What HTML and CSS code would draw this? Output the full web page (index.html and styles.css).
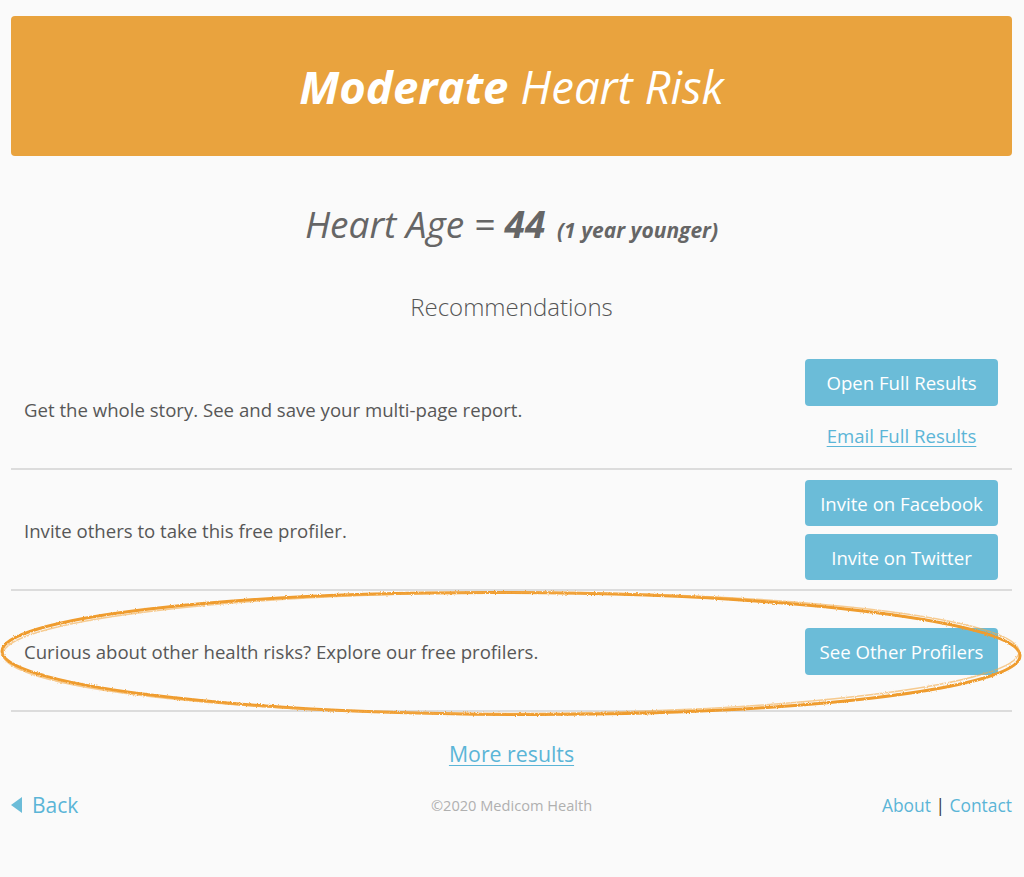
FILE: index.html
```html
<!DOCTYPE html>
<html>
<head>
<meta charset="utf-8">
<link rel="stylesheet" href="styles.css">
</head>
<body>
<div class="page">
  <header class="banner">
    <h1 class="banner-title"><b>Moderate</b> Heart Risk</h1>
  </header>

  <div class="heart-age">Heart Age = <b>44</b> <span class="diff">(1 year younger)</span></div>

  <h2 class="rec-title">Recommendations</h2>

  <section class="recs">
    <div class="rec first">
      <p class="rec-text">Get the whole story. See and save your multi-page report.</p>
      <div class="rec-actions">
        <a class="btn tall">Open Full Results</a>
        <a class="link-email">Email Full Results</a>
      </div>
    </div>
    <div class="rec">
      <p class="rec-text">Invite others to take this free profiler.</p>
      <div class="rec-actions gap">
        <a class="btn">Invite on Facebook</a>
        <a class="btn">Invite on Twitter</a>
      </div>
    </div>
    <div class="rec highlight">
      <p class="rec-text">Curious about other health risks? Explore our free profilers.</p>
      <div class="rec-actions">
        <a class="btn tall">See Other Profilers</a>
      </div>
      <svg class="circle" viewBox="0 0 1024 132" width="1024" height="132">
        <defs>
          <filter id="rough" x="-5%" y="-20%" width="110%" height="140%">
            <feTurbulence type="fractalNoise" baseFrequency="0.9" numOctaves="2" seed="3" result="n"/>
            <feDisplacementMap in="SourceGraphic" in2="n" scale="2.5" xChannelSelector="R" yChannelSelector="G"/>
          </filter>
        </defs>
        <g filter="url(#rough)">
          <ellipse cx="511" cy="64.5" rx="509" ry="61" fill="none" stroke="#ef9c2e" stroke-width="3" transform="rotate(0.25 511 64.5)"/>
          <ellipse cx="511" cy="64" rx="508" ry="60.5" fill="none" stroke="#f3aa48" stroke-width="1.5" opacity="0.6" transform="rotate(-0.15 511 64)"/>
        </g>
      </svg>
    </div>
  </section>

  <div class="more"><a>More results</a></div>

  <footer class="footer">
    <a class="back"><span class="tri"></span>Back</a>
    <span class="copy">©2020 Medicom Health</span>
    <span class="links"><a>About</a> <span class="sep">|</span> <a>Contact</a></span>
  </footer>
</div>
</body>
</html>
```
FILE: styles.css
```css
html, body {
  margin: 0;
  padding: 0;
  background: #fafafa;
}
body {
  font-family: "Open Sans", "Liberation Sans", sans-serif;
  color: #575757;
}
.page {
  padding: 16px 12px 0 11px;
}
.banner {
  background: #e9a33e;
  border-radius: 4px;
  height: 140px;
  display: flex;
  align-items: center;
  justify-content: center;
}
.banner-title {
  margin: 0;
  color: #fff;
  font-size: 45.5px;
  font-style: italic;
  font-weight: 400;
}
.banner-title b {
  font-weight: 700;
}
.heart-age {
  text-align: center;
  margin-top: 44px;
  font-size: 37px;
  font-style: italic;
  color: #666;
  line-height: 48px;
}
.heart-age b {
  font-weight: 700;
}
.heart-age .diff {
  font-size: 21px;
  font-weight: 700;
  margin-left: 2px;
}
.rec-title {
  margin: 37px 0 0;
  text-align: center;
  font-size: 24px;
  font-weight: 300;
  color: #555;
  line-height: 32px;
}
.recs {
  margin-top: 25px;
}
.rec {
  position: relative;
  display: flex;
  align-items: center;
  justify-content: space-between;
  min-height: 100px;
  padding: 10px 14px 9px 13px;
  border-bottom: 2px solid #dcdcdc;
}
.rec.first {
  padding-top: 11px;
  padding-bottom: 8px;
}
.rec-text {
  margin: 0;
  font-size: 18.6px;
  color: #575757;
}
.rec-actions {
  display: flex;
  flex-direction: column;
  align-items: center;
  width: 193px;
}
.rec-actions.gap {
  gap: 8px;
}
.btn {
  display: flex;
  align-items: center;
  justify-content: center;
  width: 193px;
  height: 46px;
  background: #6bbcd8;
  color: #fff;
  border-radius: 4px;
  font-size: 18.6px;
}
.btn.tall {
  height: 47px;
}
.link-email {
  margin-top: 18px;
  margin-bottom: 12px;
  line-height: 24px;
  font-size: 18.6px;
  color: #5bb5d7;
  text-decoration: underline;
  text-decoration-thickness: 1px;
  text-underline-offset: 3px;
}
.circle {
  position: absolute;
  left: -11px;
  top: -2px;
  pointer-events: none;
}
.more {
  text-align: center;
  margin-top: 28px;
  font-size: 21.3px;
  line-height: 28px;
}
.more a {
  color: #5bb5d7;
  text-decoration: underline;
  text-decoration-thickness: 1px;
  text-underline-offset: 3px;
}
.footer {
  position: relative;
  display: flex;
  align-items: center;
  justify-content: space-between;
  margin-top: 22px;
  height: 30px;
}
.back {
  display: flex;
  align-items: center;
  font-size: 21px;
  color: #5bb5d7;
}
.tri {
  display: inline-block;
  width: 0;
  height: 0;
  border-top: 8px solid transparent;
  border-bottom: 8px solid transparent;
  border-right: 11px solid #6bbcd8;
  margin-right: 10px;
}
.copy {
  position: absolute;
  left: 0;
  right: 0;
  text-align: center;
  font-size: 14.6px;
  color: #b0b0b0;
  pointer-events: none;
}
.links {
  font-size: 17.4px;
  color: #5bb5d7;
}
.links a {
  color: #5bb5d7;
}
.sep {
  color: #333;
}
```
